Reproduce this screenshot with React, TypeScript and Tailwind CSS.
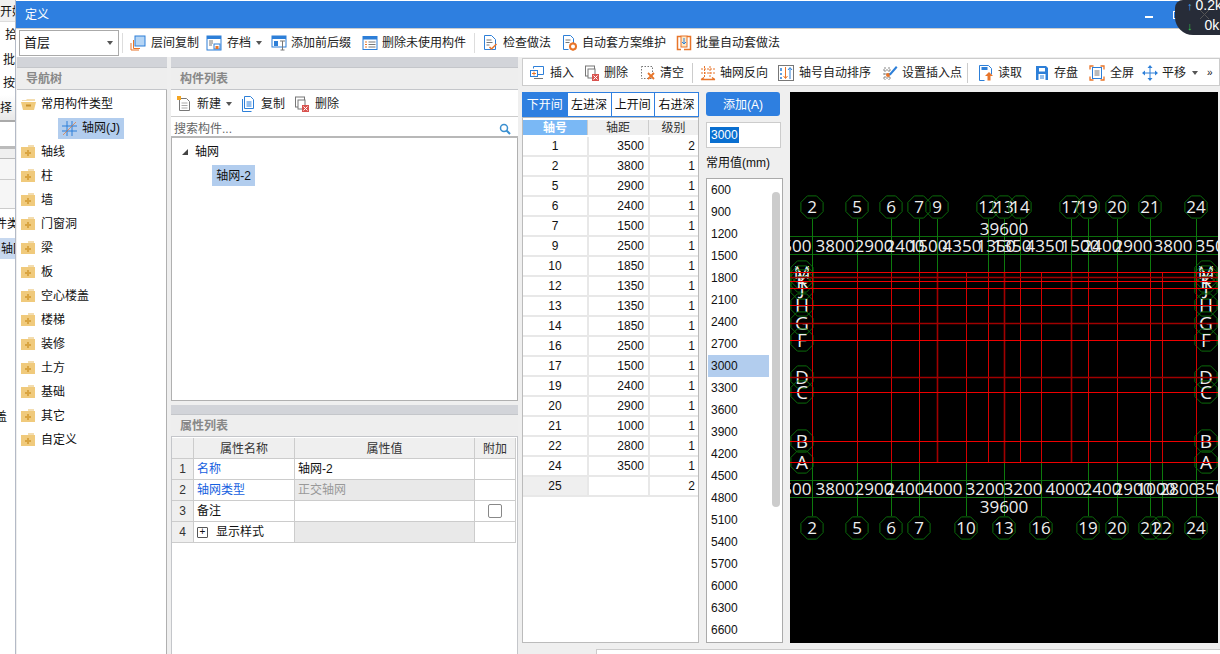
import React from "react";

const FONT = { fontFamily: '"Liberation Sans","Noto Sans CJK SC",sans-serif' };

type IconProps = { children: React.ReactNode; w?: number };
function Ic({ children, w = 16 }: IconProps) {
  return (
    <svg width={w} height={16} viewBox="0 0 16 16" fill="none" className="shrink-0">
      {children}
    </svg>
  );
}
const B = "#2d7fd8";
const O = "#e8752a";
const R = "#d9534f";
const G = "#777";

const icons: Record<string, React.ReactNode> = {
  copyFloor: (
    <Ic>
      <rect x="5" y="1" width="10" height="10" fill="#b5d5f5" stroke={B} />
      <path d="M3.500 5v8.500H10M1 8v7h8" stroke={O} />
    </Ic>
  ),
  save: (
    <Ic>
      <rect x="1" y="1" width="14" height="14" fill="#fff" stroke={B} />
      <rect x="1" y="1" width="14" height="3" fill={B} />
      <path d="M3 6h4M3 8h4M3 10h3" stroke={G} />
      <rect x="8" y="9" width="6" height="5" fill="#fff" stroke={B} />
      <rect x="9.500" y="11" width="3" height="3" fill={O} />
    </Ic>
  ),
  prefix: (
    <Ic>
      <rect x="1" y="1" width="14" height="11" fill="#fff" stroke={B} />
      <rect x="1" y="1" width="14" height="3" fill={B} />
      <rect x="3" y="6" width="4" height="5" fill={B} />
      <path d="M9 6h5M11.500 6v9M9.500 15h4" stroke={G} />
    </Ic>
  ),
  delUnused: (
    <Ic>
      <rect x="1" y="1.500" width="14" height="13" fill="#fff" stroke={B} />
      <rect x="1" y="1.500" width="14" height="3" fill={B} />
      <path d="M3 7h2M3 9.500h2M3 12h2" stroke={O} />
      <path d="M6.500 7h7M6.500 9.500h7M6.500 12h7" stroke={G} />
    </Ic>
  ),
  check: (
    <Ic>
      <path d="M2.500 .5h7l4 4v10h-11z" fill="#fff" stroke={B} />
      <path d="M4.500 5h5M4.500 7.500h6M4.500 10h3" stroke={G} />
      <path d="M7.500 12l2 2 5-5" stroke={O} strokeWidth="1.500" />
    </Ic>
  ),
  autoDoc: (
    <Ic>
      <path d="M1.500 .5h7l3 3v5M1.500 .5v14h5" stroke={B} fill="#fff" />
      <path d="M3.500 5h5M3.500 7.500h4" stroke={G} />
      <circle cx="11" cy="11.500" r="3" fill="none" stroke={O} strokeWidth="2" />
      <path d="M11 7v2M11 14v2M7 11.500h2M13 11.500h2" stroke={O} />
    </Ic>
  ),
  batch: (
    <Ic>
      <path d="M5 1.500H1.500v13H5M11 1.500h3.500v13H8" stroke={O} strokeWidth="1.500" />
      <rect x="5" y="1" width="6" height="11" fill="#fde9c8" stroke={O} />
      <path d="M8 3v6M6 7l2 2 2-2" stroke={B} />
    </Ic>
  ),
  newDoc: (
    <Ic>
      <path d="M3.500 2.500h7l3 3v9h-10z" fill="#fff" stroke={G} />
      <path d="M5.500 7h6M5.500 9.500h6M5.500 12h6" stroke="#aaa" />
      <rect x="1" y="0" width="4" height="4" fill="#f5a623" />
    </Ic>
  ),
  copy: (
    <Ic>
      <path d="M4.500 .5h6l3 3v9h-9z" fill="#fff" stroke={B} />
      <path d="M2.500 3v12.500h9" stroke={B} />
      <path d="M6.500 6h5M6.500 8h5M6.500 10h5" stroke={B} />
    </Ic>
  ),
  del: (
    <Ic>
      <rect x="1.500" y="1" width="9" height="10" fill="#fff" stroke={G} />
      <rect x="4" y="4" width="7" height="9" fill="#fff" stroke={G} />
      <rect x="8" y="9" width="7" height="7" fill={R} />
      <path d="M9.500 10.500l4 4M13.500 10.500l-4 4" stroke="#fff" />
    </Ic>
  ),
  insert: (
    <Ic>
      <path d="M4.500 3.500V1.500h10v8h-6" stroke={B} />
      <rect x="1.500" y="5.500" width="7" height="6" stroke={B} fill="#fff" />
      <path d="M3 8.500h4M5 6.500v4" stroke={O} />
      <path d="M5 13.500h9" stroke={G} />
    </Ic>
  ),
  clear: (
    <Ic>
      <rect x="1.500" y="1.500" width="11" height="12" stroke={G} strokeDasharray="1.500 1.500" />
      <path d="M8 8l6 6M14 8l-6 6" stroke={O} strokeWidth="1.800" />
    </Ic>
  ),
  reverse: (
    <Ic>
      <path d="M4.500 1v11M10 1v11M1 4h14M1 8h14" stroke={O} strokeDasharray="2 1" />
      <path d="M1 14.500h14M1 14.500l3-2M15 14.500l-3-2" stroke={O} strokeWidth="1.300" />
    </Ic>
  ),
  sort: (
    <Ic>
      <rect x=".5" y=".5" width="15" height="15" fill="#fff" stroke={G} />
      <path d="M3 3v3M3 8v2M3 12v2" stroke={B} strokeWidth="1.500" />
      <path d="M7.500 2v11M5.500 11l2 2.500 2-2.500" stroke={O} />
      <path d="M12 14V3M10 5l2-2.500 2 2.500" stroke={B} />
    </Ic>
  ),
  setPoint: (
    <Ic>
      <path d="M1 5h9M1 9h9M1 13h9M3 2v13M7 2v13" stroke="#888" strokeDasharray="2 1" />
      <circle cx="6" cy="10" r="2" fill={O} />
      <path d="M7 9l7-8 1.500 1.500-7 8z" fill={B} />
    </Ic>
  ),
  read: (
    <Ic>
      <path d="M1.500 .5h9l3 3v6M1.500 .5v15h5" stroke={B} fill="#fff" />
      <rect x="3.500" y="2" width="6" height="3" fill={B} />
      <path d="M11 7l4 4h-2.500v4.500h-3V11H7z" fill={O} />
    </Ic>
  ),
  disk: (
    <Ic>
      <path d="M2 1h10l2 2v12H2z" fill={B} />
      <rect x="5" y="3" width="6" height="3.500" fill="#fff" />
      <rect x="4.500" y="9" width="7" height="6" fill="#fff" />
      <path d="M6 11h4M6 13h4" stroke={B} />
    </Ic>
  ),
  full: (
    <Ic>
      <path d="M1 4.500v-3.500h3.500M11.500 1H15v3.500M1 11.500V15h3.500M15 11.500V15h-3.500" stroke={O} strokeWidth="1.300" />
      <rect x="3.500" y="2.500" width="9" height="11" stroke={B} />
      <path d="M5.500 6h5M5.500 8h5M5.500 10h5" stroke={G} />
    </Ic>
  ),
  pan: (
    <Ic>
      <path d="M8 0l2.500 3h-5zM8 16l2.500-3h-5zM0 8l3-2.500v5zM16 8l-3-2.500v5z" fill={B} />
      <path d="M8 3v10M3 8h10" stroke={B} />
    </Ic>
  ),
};

function Btn({ icon, label, gap = "gap-[5px]", w }: { icon: string; label: string; gap?: string; w?: number }) {
  return (
    <div className={`flex items-center ${gap} text-[12px] text-[#222] whitespace-nowrap`} style={w ? { width: w } : undefined}>
      {icons[icon]}
      <span>{label}</span>
    </div>
  );
}

const Caret = () => <div className="w-0 h-0 border-x-[3px] border-x-transparent border-t-[4px] border-t-[#555]" />;

function Folder({ open }: { open?: boolean }) {
  if (open) {
    return (
      <svg width="15" height="14" viewBox="0 0 15 14" className="shrink-0">
        <path d="M1 3h4l1-1h8v2H1z" fill="#f3ddb0" />
        <path d="M0 5h15l-2 8H2z" fill="#f0ca7c" />
        <path d="M5 8.500h5" stroke="#c9922e" strokeWidth="2" />
      </svg>
    );
  }
  return (
    <svg width="15" height="14" viewBox="0 0 15 14" className="shrink-0">
      <path d="M7 0h6v2H7z" fill="#f3ddb0" />
      <rect x="0" y="2" width="14" height="11" fill="#f0ca7c" />
      <path d="M7 5v6M4 8h6" stroke="#d9a441" strokeWidth="2" />
    </svg>
  );
}

const treeItems = ["轴线", "柱", "墙", "门窗洞", "梁", "板", "空心楼盖", "楼梯", "装修", "土方", "基础", "其它", "自定义"];

const axisRows: [string, string, string][] = [
  ["1", "3500", "2"], ["2", "3800", "1"], ["5", "2900", "1"], ["6", "2400", "1"], ["7", "1500", "1"], ["9", "2500", "1"],
  ["10", "1850", "1"], ["12", "1350", "1"], ["13", "1350", "1"], ["14", "1850", "1"], ["16", "2500", "1"], ["17", "1500", "1"],
  ["19", "2400", "1"], ["20", "2900", "1"], ["21", "1000", "1"], ["22", "2800", "1"], ["24", "3500", "1"], ["25", "", "2"],
];

const common = Array.from({ length: 21 }, (_, i) => String(600 + i * 300));

function PanelHead({ title }: { title: string }) {
  return (
    <div className="h-[23px] shrink-0 bg-[#eeeeee] border-y border-[#c4c6ca] flex items-center pl-[9px] text-[12px] font-bold text-[#888]">
      {title}
    </div>
  );
}

function Bubble({ x, y, t, letter }: { x: number; y: number; t: string; letter?: boolean }) {
  const pts = Array.from({ length: 8 }, (_, i) => {
    const a = (Math.PI / 4) * i + Math.PI / 8;
    return `${(x + 12 * Math.cos(a)).toFixed(1)},${(y + 12 * Math.sin(a)).toFixed(1)}`;
  }).join(" ");
  return (
    <g>
      <polygon points={pts} fill="none" stroke="#0b6b0b" />
      <text x={x} y={y + (letter ? 7 : 6)} textAnchor="middle" fill="#eee" fontSize={letter ? 19 : 17} fontFamily="Open Sans, sans-serif">{t}</text>
    </g>
  );
}

function Canvas() {
  const ox = 790, oy = 92;
  const ax: Record<string, number> = { 2: 812, 5: 857, 6: 891, 7: 919, 9: 937, 10: 966, 12: 988, 13: 1004, 14: 1020, 16: 1041, 17: 1071, 19: 1088, 20: 1117, 21: 1150, 22: 1162, 24: 1196 };
  const ys: [string, number][] = [["M", 272], ["L", 277], ["K", 281], ["J", 288], ["H", 305], ["G", 323], ["F", 340], ["D", 377], ["C", 392], ["B", 441], ["A", 462]];
  const dark = [9, 13, 17];
  const darkY = [277, 323, 377];
  const top = [2, 5, 6, 7, 9, 12, 13, 14, 17, 19, 20, 21, 24];
  const bottom = [2, 5, 6, 7, 10, 13, 16, 19, 20, 21, 22, 24];
  const topD: [number, string][] = [[792, "3500"], [835, "3800"], [874, "2900"], [905, "2400"], [928, "1500"], [962, "4350"], [996, "1350"], [1012, "1350"], [1045, "4350"], [1080, "1500"], [1102, "2400"], [1133, "2900"], [1173, "3800"], [1215, "3500"]];
  const botD: [number, string][] = [[792, "3500"], [835, "3800"], [874, "2900"], [905, "2400"], [943, "4000"], [985, "3200"], [1023, "3200"], [1065, "4000"], [1102, "2400"], [1133, "2900"], [1156, "1000"], [1179, "2800"], [1215, "3500"]];
  return (
    <div className="w-[428px] h-[551px] bg-black shrink-0">
      <svg width="428" height="551" viewBox={`${ox} ${oy} 428 551`}>
        {[236.5, 254.5, 480.5, 497.5].map((y) => (
          <line key={y} x1={ox} x2={1218} y1={y} y2={y} stroke="#0b6b0b" />
        ))}
        {top.map((k) => (
          <line key={k} x1={ax[k] + 0.5} x2={ax[k] + 0.5} y1={219} y2={272} stroke="#0d7a0d" />
        ))}
        {bottom.map((k) => (
          <line key={k} x1={ax[k] + 0.5} x2={ax[k] + 0.5} y1={462} y2={516} stroke="#0d7a0d" />
        ))}
        {top.map((k) => <Bubble key={k} x={ax[k]} y={207} t={String(k)} />)}
        {bottom.map((k) => <Bubble key={k} x={ax[k]} y={528} t={String(k)} />)}
        {ys.map(([t, y]) => (
          <g key={t}>
            <Bubble x={802} y={y} t={t} letter />
            <Bubble x={1206} y={y} t={t} letter />
          </g>
        ))}
        {Object.keys(ax).map((k) => (
          <line key={k} x1={ax[k] + 0.5} x2={ax[k] + 0.5} y1={272} y2={462}
            stroke={dark.includes(Number(k)) ? "#a00000" : "#d40000"} strokeWidth={dark.includes(Number(k)) ? 1.6 : 1} />
        ))}
        {ys.map(([t, y]) => (
          <line key={t} x1={ox} x2={1218} y1={y + 0.5} y2={y + 0.5}
            stroke={darkY.includes(y) ? "#a00000" : "#ee0000"} strokeWidth={darkY.includes(y) ? 1.6 : 1} />
        ))}
        {topD.map(([x, t]) => (
          <text key={x} x={x} y={252} textAnchor="middle" fill="#eee" fontSize="17" fontFamily="Open Sans, sans-serif">{t}</text>
        ))}
        {botD.map(([x, t]) => (
          <text key={x} x={x} y={495} textAnchor="middle" fill="#eee" fontSize="17" fontFamily="Open Sans, sans-serif">{t}</text>
        ))}
        <text x={1004} y={235} textAnchor="middle" fill="#eee" fontSize="17" fontFamily="Open Sans, sans-serif">39600</text>
        <text x={1004} y={513} textAnchor="middle" fill="#eee" fontSize="17" fontFamily="Open Sans, sans-serif">39600</text>
      </svg>
    </div>
  );
}

function Sliver() {
  return (
    <div className="w-[16px] shrink-0 overflow-hidden flex flex-col bg-white border-r border-[#b4bac6] whitespace-nowrap">
      <div className="h-[22px] shrink-0 bg-[#f0f0f0] flex items-center pt-[3px] border-b border-[#ddd]">开始</div>
      <div className="h-[26px] shrink-0 flex items-center gap-[3px]">
        <div className="w-[2px] h-[5px] bg-[#555]" />
        <span className="ml-[2px]">拾取</span>
      </div>
      <div className="h-[23px] shrink-0 flex items-center gap-[3px]">
        <div className="w-[4px] h-[13px] bg-[#6fa5de]" />
        <span>批量</span>
      </div>
      <div className="h-[24px] shrink-0 flex items-center gap-[3px]">
        <div className="w-[4px] h-[13px] bg-[#6fa5de]" />
        <span>按钮</span>
      </div>
      <div className="h-[27px] shrink-0 bg-gradient-to-b from-white to-[#e8e8e8] border-b-2 border-[#aaa] flex items-center -ml-[12px]">选择</div>
      <div className="h-[24px] shrink-0" />
      <div className="h-[13px] shrink-0 bg-[#efefef] border-t-[3px] border-b border-[#bbb]" />
      <div className="h-[21px] shrink-0 bg-[#f6f6f6] border-b border-[#ccc]" />
      <div className="h-[29px] shrink-0 bg-[#f6f6f6] border-b border-[#ccc]" />
      <div className="h-[29px] shrink-0 flex items-center -ml-[5px]">件类</div>
      <div className="h-[21px] shrink-0 flex items-center bg-[#c7d8ef] pl-px">轴网</div>
      <div className="h-[148px] shrink-0" />
      <div className="h-[20px] shrink-0 flex items-center -ml-[5px]">盖</div>
    </div>
  );
}

const CELL = "h-[21px] border-r border-b border-[#ccc] flex items-center";
const HEAD = "h-[21px] bg-[#efefef] border-r border-b border-[#ccc] flex items-center justify-center text-[#333]";
const TOPHEAD = "h-[21px] bg-[#efefef] border-r border-b border-[#ccc] flex items-center justify-center text-[#333] pt-[2px]";

export default function App() {
  return (
    <div className="relative w-[1220px] h-[654px] overflow-hidden flex bg-[#efefef] text-[12px] text-[#111]" style={FONT}>
      <Sliver />

      {/* definition window */}
      <div className="flex-1 min-w-0 flex flex-col">
        <div className="h-px bg-white shrink-0" />
        <div className="h-[27px] bg-[#2e7fe0] shrink-0 flex items-center pl-[9px] text-white text-[12px]">
          <span className="flex-1">定义</span>
          <div className="w-[8px] h-[2px] bg-white mr-[20px] mt-[4px]" />
          <div className="w-[8px] h-[8px] border border-white mr-[39px]" />
        </div>

        {/* main toolbar */}
        <div className="h-[29px] shrink-0 bg-white flex items-center pl-[3px] border-t border-[#ccc]">
          <div className="w-[100px] h-[26px] border border-[#aaa] flex items-center justify-between pl-[4px] pr-[5px] text-[13px] mr-[3px]">
            <span>首层</span>
            <Caret />
          </div>
          <div className="w-px h-[20px] bg-[#ddd] mr-[7px]" />
          <Btn icon="copyFloor" label="层间复制" w={76} />
          <Btn icon="save" label="存档" w={50} />
          <Caret />
          <div className="w-[9px]" />
          <Btn icon="prefix" label="添加前后缀" gap="gap-[4px]" w={91} />
          <Btn icon="delUnused" label="删除未使用构件" gap="gap-[4px]" w={112} />
          <div className="w-px h-[20px] bg-[#ddd] mr-[7px]" />
          <Btn icon="check" label="检查做法" w={80} />
          <Btn icon="autoDoc" label="自动套方案维护" gap="gap-[4px]" w={114} />
          <Btn icon="batch" label="批量自动套做法" gap="gap-[4px]" />
        </div>

        <div className="flex-1 min-h-0 flex">
          {/* nav tree */}
          <div className="w-[151px] shrink-0 flex flex-col pl-px">
            <div className="h-[10px] bg-[#d2d4d9] shrink-0" />
            <PanelHead title="导航树" />
            <div className="flex-1 bg-white border-r border-[#b0b0b0] pt-[2px]">
              <div className="h-[24px] flex items-center pl-[4px] gap-[5px]"><Folder open /><span>常用构件类型</span></div>
              <div className="h-[24px] flex items-center pl-[41px]">
                <div className="h-[21px] w-[66px] bg-[#b2cdee] flex items-center pl-[4px] gap-[5px]">
                  <svg width="15" height="15" viewBox="0 0 15 15" className="shrink-0">
                    <path d="M0 5h15M0 10h15M5 0v15M10 0v15" stroke={B} />
                    <path d="M1 14L14 1" stroke={O} strokeWidth=".7" />
                  </svg>
                  <span>轴网(J)</span>
                </div>
              </div>
              {treeItems.map((t) => (
                <div key={t} className="h-[24px] flex items-center pl-[4px] gap-[5px]"><Folder /><span>{t}</span></div>
              ))}
            </div>
          </div>

          <div className="w-[4px] shrink-0" />

          {/* list + properties */}
          <div className="w-[347px] shrink-0 flex flex-col">
            <div className="h-[10px] bg-[#d2d4d9] shrink-0" />
            <PanelHead title="构件列表" />
            <div className="h-[27px] shrink-0 bg-white flex items-center pl-[5px] pt-[2px] border-b border-[#ccc]">
              <Btn icon="newDoc" label="新建" w={50} />
              <Caret />
              <div className="w-[8px]" />
              <Btn icon="copy" label="复制" w={54} />
              <Btn icon="del" label="删除" />
            </div>
            <div className="h-[21px] shrink-0 bg-white border-b-2 border-[#b8b8b8] flex items-center justify-between pl-[3px] pr-[7px] pt-[4px] text-[#666]">
              <span>搜索构件...</span>
              <svg width="12" height="12" viewBox="0 0 12 12">
                <circle cx="5" cy="5" r="3.500" fill="none" stroke="#3a8fd0" strokeWidth="1.500" />
                <path d="M7.500 7.500L11 11" stroke="#3a8fd0" strokeWidth="2" />
              </svg>
            </div>
            <div className="flex-1 min-h-0 bg-white border-x border-b border-[#b0b0b0]">
              <div className="h-[27px] flex items-center pl-[10px] gap-[7px] pt-[1px]">
                <div className="w-0 h-0 border-l-[6px] border-l-transparent border-b-[6px] border-b-[#444]" />
                <span>轴网</span>
              </div>
              <div className="pl-[40px]">
                <div className="w-[43px] h-[21px] bg-[#b2cdee] flex items-center justify-center">轴网-2</div>
              </div>
            </div>
            <div className="h-[4px] shrink-0" />
            <div className="h-[9px] bg-[#d2d4d9] shrink-0" />
            <PanelHead title="属性列表" />
            <div className="h-[217px] shrink-0 bg-white border-x border-[#c4c6ca] pt-px">
              <div className="w-[344px] grid grid-cols-[22px_101px_180px_41px]">
                <div className={TOPHEAD} />
                <div className={TOPHEAD}>属性名称</div>
                <div className={TOPHEAD}>属性值</div>
                <div className={TOPHEAD}>附加</div>

                <div className={HEAD}>1</div>
                <div className={`${CELL} pl-[3px] text-[#1560e0]`}>名称</div>
                <div className={`${CELL} pl-[3px]`}>轴网-2</div>
                <div className={CELL} />

                <div className={HEAD}>2</div>
                <div className={`${CELL} pl-[3px] text-[#1560e0]`}>轴网类型</div>
                <div className={`${CELL} bg-[#e9e9e9] pl-[3px] text-[#999]`}>正交轴网</div>
                <div className={CELL} />

                <div className={HEAD}>3</div>
                <div className={`${CELL} pl-[3px]`}>备注</div>
                <div className={CELL} />
                <div className={`${CELL} justify-center`}>
                  <div className="w-[14px] h-[14px] border border-[#888] rounded-[2px] bg-white" />
                </div>

                <div className={HEAD}>4</div>
                <div className={`${CELL} pl-[3px] gap-[8px]`}>
                  <div className="w-[11px] h-[11px] border border-[#555] rounded-[1px] flex items-center justify-center text-[10px] leading-none">+</div>
                  <span>显示样式</span>
                </div>
                <div className={`${CELL} bg-[#e9e9e9]`} />
                <div className={CELL} />
              </div>
            </div>
          </div>

          {/* right region */}
          <div className="flex-1 min-w-0 flex flex-col pl-[4px] pt-px">
            <div className="h-[28px] shrink-0 bg-white border border-[#ccc] flex items-center pl-[6px] pt-px whitespace-nowrap overflow-hidden">
              <Btn icon="insert" label="插入" w={55} />
              <Btn icon="del" label="删除" gap="gap-[4px]" w={56} />
              <Btn icon="clear" label="清空" gap="gap-[4px]" w={52} />
              <div className="w-px h-[20px] bg-[#ccc] mr-[7px]" />
              <Btn icon="reverse" label="轴网反向" gap="gap-[4px]" w={78} />
              <Btn icon="sort" label="轴号自动排序" gap="gap-[5px]" w={104} />
              <Btn icon="setPoint" label="设置插入点" gap="gap-[4px]" w={85} />
              <div className="w-px h-[20px] bg-[#ccc] mr-[10px]" />
              <Btn icon="read" label="读取" gap="gap-[4px]" w={56} />
              <Btn icon="disk" label="存盘" gap="gap-[4px]" w={55} />
              <Btn icon="full" label="全屏" gap="gap-[5px]" w={53} />
              <Btn icon="pan" label="平移" gap="gap-[4px]" w={50} />
              <Caret />
              <span className="ml-[9px] text-[10px]">»</span>
            </div>

            <div className="flex-1 min-h-0 flex pt-[6px] gap-[7px]">
              {/* axis table */}
              <div className="w-[177px] h-[551px] shrink-0 flex flex-col">
                <div className="h-[25px] shrink-0 grid grid-cols-4 border border-[#2e7fe0]">
                  <div className="bg-[#2e7fe0] text-white flex items-center justify-center pt-px">下开间</div>
                  <div className="bg-white border-l border-[#2e7fe0] flex items-center justify-center pt-px">左进深</div>
                  <div className="bg-white border-l border-[#2e7fe0] flex items-center justify-center pt-px">上开间</div>
                  <div className="bg-white border-l border-[#2e7fe0] flex items-center justify-center pt-px">右进深</div>
                </div>
                <div className="flex-1 min-h-0 bg-white border border-[#bbb] pt-[2px]">
                  <div className="grid grid-cols-[64px_61px_50px]">
                    <div className="h-[15px] bg-[#7ab8f5] text-white font-bold flex items-center justify-center">轴号</div>
                    <div className="h-[15px] bg-[#efefef] border-l border-[#ccc] flex items-center justify-center text-[#333]">轴距</div>
                    <div className="h-[15px] bg-[#efefef] border-l border-[#ccc] flex items-center justify-center text-[#333]">级别</div>
                  </div>
                  <div className="h-[2px]" />
                  {axisRows.map(([a, d, l]) => (
                    <div key={a} className="grid grid-cols-[64px_61px_50px] h-[20px] border-b-2 border-[#e8e8e8]">
                      <div className={`flex items-center justify-center ${a === "25" ? "bg-[#efefef]" : ""}`}>{a}</div>
                      <div className="border-l-2 border-[#e8e8e8] flex items-center justify-end pr-[4px]">{d}</div>
                      <div className="border-l-2 border-[#e8e8e8] flex items-center justify-end pr-[3px]">{l}</div>
                    </div>
                  ))}
                </div>
              </div>

              {/* common values */}
              <div className="w-[77px] shrink-0 flex flex-col h-[551px]">
                <div className="h-[24px] shrink-0 w-[74px] bg-[#2e7fe0] rounded-[3px] text-white flex items-center justify-center pt-px">添加(A)</div>
                <div className="mt-[6px] h-[26px] w-[75px] shrink-0 bg-white border border-[#ccc] flex items-center pl-[3px]">
                  <span className="bg-[#0a6fd0] text-white leading-[16px] h-[16px] px-px">3000</span>
                </div>
                <div className="h-[30px] shrink-0 flex items-center text-[12px]">常用值(mm)</div>
                <div className="flex-1 min-h-0 bg-white border border-[#aaa] relative overflow-hidden">
                  {common.map((v) => (
                    <div key={v} className={`h-[22px] w-[61px] ml-px flex items-center pl-[3px] ${v === "3000" ? "bg-[#b2cdee]" : ""}`}>{v}</div>
                  ))}
                  <div className="absolute left-[65px] top-[13px] w-[8px] h-[315px] rounded bg-[#cccccc]" />
                </div>
              </div>

              <Canvas />
            </div>
            <div className="h-[11px] shrink-0 flex">
              <div className="w-[74px]" />
              <div className="flex-1 mt-[6px] bg-white border-t border-l border-[#ccc]" />
            </div>
          </div>
        </div>
      </div>

      {/* network speed widget */}
      <div className="absolute right-0 top-0 w-[45px] h-[35px] bg-[#272c38] rounded-bl-[18px] rounded-tl-[8px] text-white text-[14px] leading-[16px] overflow-hidden">
        <div className="absolute left-[12px] top-[-3px] whitespace-nowrap"><span className="text-[#4aa8f0] text-[11px] font-bold mr-[3px]">↑</span>0.2k</div>
        <div className="absolute left-[12px] top-[17px] whitespace-nowrap"><span className="text-[#36c24a] text-[11px] font-bold mr-[12px]">↓</span>0k</div>
        <svg className="absolute left-[25px] top-[10px]" width="9" height="9" viewBox="0 0 9 9">
          <path d="M0 0l9 9M9 0L0 9" stroke="#555" />
        </svg>
      </div>
    </div>
  );
}
